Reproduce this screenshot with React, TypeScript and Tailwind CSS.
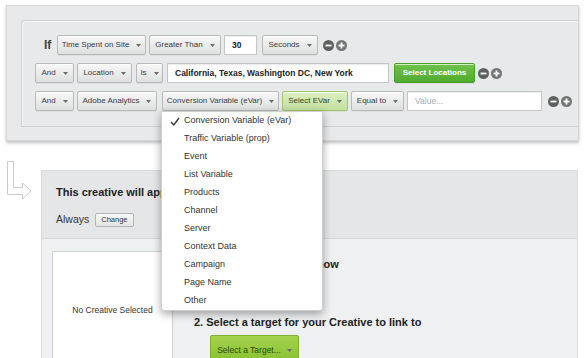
import React from 'react';

type Variant = 'gray' | 'green' | 'lightGreen' | 'lime';

const variantClasses: Record<Variant, string> = {
  gray: 'bg-gradient-to-b from-[#f8f8f8] to-[#dedfdf] border-[#b8b9b9] text-[#3b3b3b]',
  green: 'bg-gradient-to-b from-[#6fc44b] to-[#4fab2d] border-[#4a9e2b] text-white font-bold',
  lightGreen: 'bg-gradient-to-b from-[#dcefc2] to-[#c3e09d] border-[#9cc76a] text-[#34452a]',
  lime: 'bg-gradient-to-b from-[#a3d34c] to-[#86bf2d] border-[#7cb02f] text-[#2e4614]',
};

const Caret = () => (
  <svg width="5" height="3" viewBox="0 0 5 3" className="shrink-0" aria-hidden="true">
    <path d="M0 0h5L2.5 3z" fill="#6b6b6b" />
  </svg>
);

interface BtnProps {
  w: string;
  variant?: Variant;
  caret?: boolean;
  className?: string;
  children: React.ReactNode;
}

const Btn: React.FC<BtnProps> = ({ w, variant = 'gray', caret = true, className = '', children }) => (
  <div
    className={`${w} ${variantClasses[variant]} ${className} h-5 shrink-0 flex items-center justify-center gap-[7px] border rounded-[2px] text-[8px] shadow-[inset_0_1px_0_rgba(255,255,255,0.7),0_1px_0_rgba(0,0,0,0.05)] whitespace-nowrap`}
  >
    <span>{children}</span>
    {caret && <Caret />}
  </div>
);

const Field: React.FC<{ w: string; className?: string; children?: React.ReactNode; placeholder?: string }> = ({
  w,
  className = '',
  children,
  placeholder,
}) => (
  <div
    className={`${w} ${className} h-5 shrink-0 flex items-center bg-white border border-[#c4c5c5] shadow-[inset_0_1px_1px_rgba(0,0,0,0.08)] pl-[7px] text-[8.5px] whitespace-nowrap overflow-hidden`}
  >
    {children ? (
      <span className="font-bold text-[#222]">{children}</span>
    ) : (
      <span className="text-[#a9a9a9]">{placeholder}</span>
    )}
  </div>
);

const PlusMinus: React.FC<{ className?: string }> = ({ className = '' }) => (
  <div className={`flex items-center gap-[2px] ${className}`}>
    <svg width="11" height="11" viewBox="0 0 11 11" aria-hidden="true">
      <circle cx="5.5" cy="5.5" r="5.5" fill="#5f6060" />
      <rect x="2.5" y="4.6" width="6" height="1.8" fill="#fff" />
    </svg>
    <svg width="11" height="11" viewBox="0 0 11 11" aria-hidden="true">
      <circle cx="5.5" cy="5.5" r="5.5" fill="#747575" />
      <rect x="2.5" y="4.6" width="6" height="1.8" fill="#fff" />
      <rect x="4.6" y="2.5" width="1.8" height="6" fill="#fff" />
    </svg>
  </div>
);

const menuItems = [
  'Conversion Variable (eVar)',
  'Traffic Variable (prop)',
  'Event',
  'List Variable',
  'Products',
  'Channel',
  'Server',
  'Context Data',
  'Campaign',
  'Page Name',
  'Other',
];

const VariableMenu = () => (
  <div className="absolute left-[-1px] top-full z-50 w-[162px] bg-white border border-[#cfcfcf] rounded-b-[3px] shadow-[0_3px_8px_rgba(0,0,0,0.35)]">
    {menuItems.map((item, i) => (
      <div key={item} className="h-[18px] flex items-center text-[9px] text-[#333]">
        <span className="w-[22px] flex justify-center pl-[3px]">
          {i === 0 && (
            <svg width="10" height="9" viewBox="0 0 10 9" aria-hidden="true">
              <path d="M1 5l2.8 3L9 1" fill="none" stroke="#333" strokeWidth="1.3" />
            </svg>
          )}
        </span>
        <span>{item}</span>
      </div>
    ))}
  </div>
);

const App: React.FC = () => {
  return (
    <div
      className="w-[584px] h-[358px] bg-white overflow-hidden"
      style={{ fontFamily: '"Liberation Sans", Arial, sans-serif' }}
    >
      {/* rule builder */}
      <div className="mt-[5px] ml-[6px] w-[573px] bg-[#e8e9ea] border border-[#d6d7d8] pt-[14px] pl-[14px] pb-[13px] shadow-[0_2px_3px_rgba(0,0,0,0.25)]">
        <div className="border-l border-t border-b border-[#cfd0d1] rounded-tl-[4px] pl-[13px] pt-[14px] pb-[15px] flex flex-col gap-2 shadow-[inset_1px_1px_0_rgba(255,255,255,0.6)]">
          <div className="flex items-center">
            <span className="ml-[9px] w-[13px] text-[12px] font-bold text-[#444]">If</span>
            <Btn w="w-[89px]">Time Spent on Site</Btn>
            <Btn w="w-[72px]" className="ml-[3px]">Greater Than</Btn>
            <Field w="w-[33px]" className="ml-[3px]">30</Field>
            <Btn w="w-[56px]" className="ml-[5px]">Seconds</Btn>
            <PlusMinus className="ml-[5px]" />
          </div>
          <div className="flex items-center">
            <Btn w="w-[39px]">And</Btn>
            <Btn w="w-[55px]" className="ml-[3px]">Location</Btn>
            <Btn w="w-[27px]" className="ml-[4px]">Is</Btn>
            <Field w="w-[222px]" className="ml-[4px]">California, Texas, Washington DC, New York</Field>
            <Btn w="w-[81px]" variant="green" caret={false} className="ml-[5px]">Select Locations</Btn>
            <PlusMinus className="ml-[3px]" />
          </div>
          <div className="flex items-center">
            <Btn w="w-[39px]">And</Btn>
            <Btn w="w-[80px]" className="ml-[3px]">Adobe Analytics</Btn>
            <div className="relative ml-[5px]">
              <Btn w="w-[117px]">Conversion Variable (eVar)</Btn>
              <VariableMenu />
            </div>
            <Btn w="w-[66px]" variant="lightGreen" className="ml-[3px]">Select EVar</Btn>
            <Btn w="w-[53px]" className="ml-[3px]">Equal to</Btn>
            <Field w="w-[135px]" className="ml-[3px]" placeholder="Value..." />
            <PlusMinus className="ml-[6px]" />
          </div>
        </div>
      </div>

      {/* creative settings */}
      <div className="mt-[19px] flex">
        <div className="w-[41px] shrink-0">
          <svg width="41" height="45" viewBox="0 0 41 45" aria-hidden="true">
            <path
              d="M7.5 1.5h6v26h9v-4.5l8.5 8-8.5 8v-4.5h-15z"
              fill="#fff"
              stroke="#cbcbcb"
              strokeWidth="1"
            />
          </svg>
        </div>
        <div className="mt-[10px] w-[537px] border border-[#dadbdc] bg-[#eef0f1]">
          <div className="h-[68px] bg-[#e5e6e7] border-b border-[#d4d5d6] pl-[14px] pt-[15px]">
            <div className="text-[11px] font-bold text-[#222] leading-[13px]">This creative will appear:</div>
            <div className="mt-[13px] flex items-center gap-[6px]">
              <span className="text-[10.5px] text-[#333]">Always</span>
              <div className="h-[14px] px-[5px] flex items-center border border-[#b3b4b4] rounded-[2px] bg-gradient-to-b from-[#fafafa] to-[#e2e3e3] text-[7.5px] text-[#333]">
                Change
              </div>
            </div>
          </div>
          <div className="flex pl-[10px] pt-[12px]">
            <div className="w-[121px] h-[130px] shrink-0 bg-white border border-[#cfd0d0] flex justify-center pt-[52px] text-[8.5px] text-[#333]">
              No Creative Selected
            </div>
            <div className="ml-[21px] pt-[7px]">
              <div className="text-[11px] font-bold text-[#222] leading-[13px]">1. Select a Creative to show</div>
              <div className="mt-[45px] text-[11px] font-bold text-[#222] leading-[13px]">
                2. Select a target for your Creative to link to
              </div>
              <div className="mt-[6px] ml-[16px] h-[30px] w-[89px] flex items-center justify-center gap-[6px] border border-[#7cb02f] rounded-[2px] bg-gradient-to-b from-[#a3d34c] to-[#86bf2d] text-[8.5px] text-[#2e4614]">
                <span>Select a Target...</span>
                <Caret />
              </div>
            </div>
          </div>
        </div>
      </div>
    </div>
  );
};

export default App;
